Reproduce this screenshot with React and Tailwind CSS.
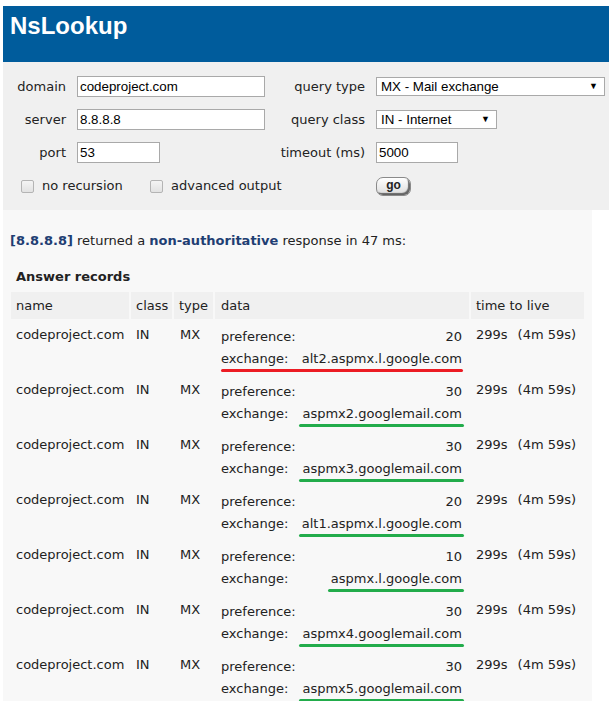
import React from "react";

const records = [
  { pref: 20, ex: "alt2.aspmx.l.google.com", red: true },
  { pref: 30, ex: "aspmx2.googlemail.com" },
  { pref: 30, ex: "aspmx3.googlemail.com" },
  { pref: 20, ex: "alt1.aspmx.l.google.com" },
  { pref: 10, ex: "aspmx.l.google.com" },
  { pref: 30, ex: "aspmx4.googlemail.com" },
  { pref: 30, ex: "aspmx5.googlemail.com" },
];

function Input({ value, w }) {
  return (
    <input
      readOnly
      value={value}
      className={`${w} h-[21px] border border-[#a9a9a9] bg-white px-[2px] font-['Liberation_Sans',Arial,sans-serif] text-[13.33px] text-black outline-none`}
    />
  );
}

function Select({ value, w }) {
  return (
    <div
      className={`${w} h-[19px] border border-[#a9a9a9] bg-white flex items-center justify-between pl-[4px] pr-[6px] font-['Liberation_Sans',Arial,sans-serif] text-[13.33px] text-black`}
    >
      <span>{value}</span>
      <span className="text-[9px] leading-none">▼</span>
    </div>
  );
}

function Checkbox() {
  return (
    <span className="inline-block w-[13px] h-[13px] rounded-[2px] border border-[#b4b4b4] bg-gradient-to-b from-[#f4f4f4] to-[#e2e2e2]" />
  );
}

const grid = "grid grid-cols-[118px_41px_39px_254px_113px] gap-x-[2px]";

export default function App() {
  return (
    <div className="min-h-screen bg-white pt-[6px] pl-[3px] font-['DejaVu_Sans',Verdana,sans-serif] text-[13px] text-[#222]">
      <div className="bg-[#005c9c] h-[56px] pl-[7px] pt-[6px]">
        <h1 className="font-['Liberation_Sans',Arial,sans-serif] font-bold text-[24px] leading-[28px] text-white">
          NsLookup
        </h1>
      </div>

      <div className="bg-[#f0f0f0] h-[148px] pt-[14px] flex flex-col gap-[12px]">
        <div className="flex items-center h-[21px]">
          <span className="w-[63px] text-right">domain</span>
          <span className="ml-[11px]"><Input value="codeproject.com" w="w-[188px]" /></span>
          <span className="w-[100px] text-right">query type</span>
          <span className="ml-[11px]"><Select value="MX - Mail exchange" w="w-[229px]" /></span>
        </div>
        <div className="flex items-center h-[21px]">
          <span className="w-[63px] text-right">server</span>
          <span className="ml-[11px]"><Input value="8.8.8.8" w="w-[188px]" /></span>
          <span className="w-[100px] text-right">query class</span>
          <span className="ml-[11px]"><Select value="IN - Internet" w="w-[121px]" /></span>
        </div>
        <div className="flex items-center h-[21px]">
          <span className="w-[63px] text-right">port</span>
          <span className="ml-[11px] w-[188px]"><Input value="53" w="w-[83px]" /></span>
          <span className="w-[100px] text-right">timeout (ms)</span>
          <span className="ml-[11px]"><Input value="5000" w="w-[82px]" /></span>
        </div>
        <div className="flex items-center h-[21px] pt-[1px]">
          <span className="ml-[18px] flex items-center"><Checkbox /></span>
          <span className="ml-[8px] w-[108px]">no recursion</span>
          <span className="flex items-center"><Checkbox /></span>
          <span className="ml-[8px] w-[205px]">advanced output</span>
          <button className="w-[35px] h-[19px] rounded-[7px] border border-[#8a8a8a] bg-gradient-to-b from-white to-[#dcdcdc] shadow-[inset_-2px_-2px_1px_rgba(0,0,0,0.55)] font-['Liberation_Sans',Arial,sans-serif] font-bold text-[12px] leading-none text-[#222] pb-[2px]">
            go
          </button>
        </div>
      </div>

      <div className="bg-[#f8f8f8] w-[589px] pt-[23px] pb-[20px]">
        <p className="pl-[7px] leading-[16px]">
          <b className="text-[#1f3e73]">[8.8.8.8]</b> returned a{" "}
          <b className="text-[#1f3e73]">non-authoritative</b> response in 47 ms:
        </p>
        <div className="pl-[8px]">
          <h2 className="mt-[20px] pl-[5px] font-bold leading-[16px]">Answer records</h2>
          <div className={`${grid} mt-[7px]`}>
            {["name", "class", "type", "data", "time to live"].map((h, i) => (
              <div key={h} className={`bg-[#f0f0f0] h-[27px] flex items-center ${i === 3 ? "pl-[6px]" : "pl-[5px]"}`}>
                {h}
              </div>
            ))}
          </div>
          <div className="flex flex-col gap-[2px] mt-[2px]">
            {records.map((r, idx) => (
              <div key={idx} className={`${grid} h-[53px]`}>
                <div className="pl-[5px] pt-[6px] leading-[16px]">codeproject.com</div>
                <div className="pl-[5px] pt-[6px] leading-[16px]">IN</div>
                <div className="pl-[6px] pt-[6px] leading-[16px]">MX</div>
                <div className="pl-[6px] pr-[7px] pt-[8px] leading-[16px] flex flex-col gap-[6px]">
                  <div className="flex justify-between">
                    <span>preference:</span>
                    <span>{r.pref}</span>
                  </div>
                  <div className="relative flex justify-between">
                    <span>exchange:</span>
                    <span className="relative">
                      {r.ex}
                      {!r.red && (
                        <span className="absolute left-[-3px] right-[-2px] top-[18px] h-[3px] rounded-full bg-[#22ac4b]" />
                      )}
                    </span>
                    {r.red && (
                      <span className="absolute left-0 right-[-1px] top-[18px] h-[3px] rounded-full bg-[#ec1c24]" />
                    )}
                  </div>
                </div>
                <div className="pl-[5px] pt-[6px] leading-[16px] flex gap-[10px] whitespace-nowrap">
                  <span>299s</span>
                  <span>(4m 59s)</span>
                </div>
              </div>
            ))}
          </div>
        </div>
      </div>
    </div>
  );
}
